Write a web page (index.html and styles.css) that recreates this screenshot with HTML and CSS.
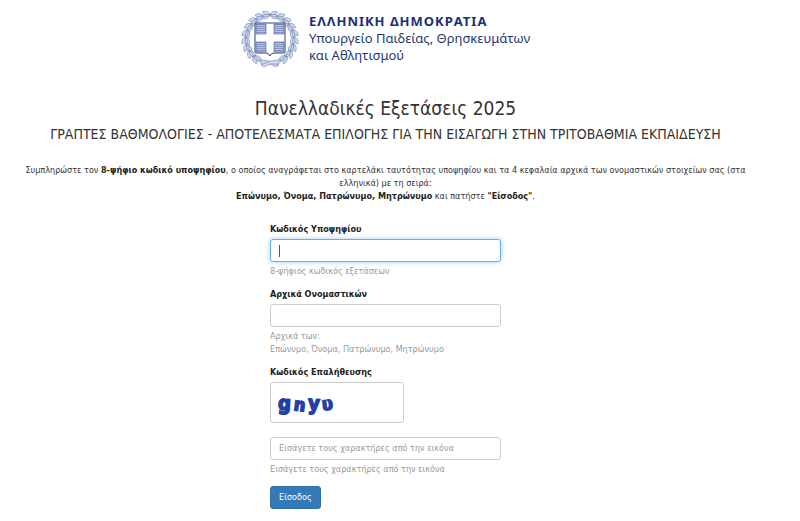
FILE: index.html
```html
<!DOCTYPE html>
<html lang="el">
<head>
  <meta charset="UTF-8">
  <meta name="viewport" content="width=device-width, initial-scale=1.0">
  <title>Πανελλαδικές Εξετάσεις 2025</title>
  <link rel="stylesheet" href="styles.css">
</head>

<body>
  <div class="page">
    <header class="brand">
      <svg class="emblem" viewBox="0 0 58 58" aria-hidden="true">
        <defs>
          <g id="leaf">
            <path d="M30 5C27 6 24 5 22.500 1.500C26 .5 29 1.500 30 5Z"/>
            <path d="M30 5C28 8.500 25 9.500 21.500 8C23.500 5 26.500 3.500 30 5Z"/>
            <path d="M30 5C27 4 24 4 21 5.500C24 7 27 7 30 5Z"/>
          </g>
          <g id="branch">
            <use href="#leaf" transform="rotate(-2 29 29)"/>
            <use href="#leaf" transform="rotate(-19 29 29)"/>
            <use href="#leaf" transform="rotate(-36 29 29)"/>
            <use href="#leaf" transform="rotate(-53 29 29)"/>
            <use href="#leaf" transform="rotate(-70 29 29)"/>
            <use href="#leaf" transform="rotate(-87 29 29)"/>
            <use href="#leaf" transform="rotate(-104 29 29)"/>
            <use href="#leaf" transform="rotate(-121 29 29)"/>
            <use href="#leaf" transform="rotate(-138 29 29)"/>
          </g>
          <pattern id="lines" width="2" height="2" patternUnits="userSpaceOnUse">
            <rect width="2" height="2" fill="#b6c1dc"/>
            <rect width="2" height="1" fill="#8695c0"/>
          </pattern>
        </defs>
        <g class="wreath">
          <use href="#branch"/>
          <use href="#branch" transform="translate(58 0) scale(-1 1)"/>
          <path d="M20 50Q29 50 38 55L35 57L29 54L20 54Z"/>
          <path d="M38 50Q29 50 20 55L23 57L29 54L38 54Z"/>
        </g>
        <path class="shield" d="M14 13H44V41Q44 43 42 43H33Q30 43 29 46Q28 43 25 43H16Q14 43 14 41Z"/>
        <g fill="url(#lines)" stroke="#4b5f9b" stroke-width=".6">
          <path d="M15 14H25V24H15ZM33 14H43V24H33ZM15 32H25V42H16L15 41ZM33 32H43V41L42 42H33Z"/>
        </g>
      </svg>
      <div class="brandText">
        <strong>ΕΛΛΗΝΙΚΗ ΔΗΜΟΚΡΑΤΙΑ</strong>
        <span>Υπουργείο Παιδείας, Θρησκευμάτων</span>
        <span>και Αθλητισμού</span>
      </div>
    </header>

    <h1>Πανελλαδικές Εξετάσεις 2025</h1>
    <h2>ΓΡΑΠΤΕΣ ΒΑΘΜΟΛΟΓΙΕΣ - ΑΠΟΤΕΛΕΣΜΑΤΑ ΕΠΙΛΟΓΗΣ ΓΙΑ ΤΗΝ ΕΙΣΑΓΩΓΗ ΣΤΗΝ ΤΡΙΤΟΒΑΘΜΙΑ ΕΚΠΑΙΔΕΥΣΗ</h2>

    <p class="intro">
      Συμπληρώστε τον <b>8-ψήφιο κωδικό υποψηφίου</b>, ο οποίος αναγράφεται στο καρτελάκι ταυτότητας υποψηφίου και τα 4 κεφαλαία αρχικά των ονομαστικών στοιχείων σας (στα ελληνικά) με τη σειρά:<br>
      <b>Επώνυμο, Όνομα, Πατρώνυμο, Μητρώνυμο</b> και πατήστε <b>"Είσοδος"</b>.
    </p>

    <form class="login">
      <div class="group">
        <label for="code">Κωδικός Υποψηφίου</label>
        <input class="control active" id="code" type="text" aria-describedby="codeHelp">
        <span class="help" id="codeHelp">8-ψήφιος κωδικός εξετάσεων</span>
      </div>
      <div class="group">
        <label for="initials">Αρχικά Ονομαστικών</label>
        <input class="control" id="initials" type="text" aria-describedby="initialsHelp">
        <span class="help" id="initialsHelp">Αρχικά των:<br>Επώνυμο, Όνομα, Πατρώνυμο, Μητρώνυμο</span>
      </div>
      <div class="group">
        <label for="captcha">Κωδικός Επαλήθευσης</label>
        <div class="captcha">
          <svg viewBox="0 0 132 39" aria-hidden="true">
            <text x="7" y="27" transform="rotate(3 13 22)">g</text>
            <text x="23" y="28" class="small" transform="rotate(7 29 22)">n</text>
            <text x="37" y="27" transform="rotate(3 43 22)">y</text>
            <text x="51" y="27" class="small" transform="rotate(-6 56 22)">υ</text>
          </svg>
        </div>
        <input class="control" id="captcha" type="text" placeholder="Εισάγετε τους χαρακτήρες από την εικόνα" aria-describedby="captchaHelp">
        <span class="help" id="captchaHelp">Εισάγετε τους χαρακτήρες από την εικόνα</span>
      </div>
      <button class="submit" type="submit">Είσοδος</button>
    </form>
  </div>
</body>
</html>
```

FILE: styles.css
```css
*{box-sizing:border-box}
body{margin:0;background:#fff;color:#333;
     font:9px/13px "DejaVu Sans Condensed","DejaVu Sans",sans-serif;}
.page{padding:10px 48px 12px 19px;}

/* ministry logo */
.brand{display:flex;justify-content:center;gap:10px;color:#26386f;
       font:13px/17px "Noto Sans","Open Sans",sans-serif;}
.emblem{width:58px;height:58px;flex:none}
.wreath{fill:#d3dbeb;stroke:#6f82b4;stroke-width:.6}
.shield{fill:#fff;stroke:#2b4080;stroke-width:1}
.brandText{display:flex;flex-direction:column;padding-top:3px}
.brandText strong{color:#1c3175;letter-spacing:1px}

h1,h2{margin:0;font-weight:normal;text-align:center}
h1{margin-top:28px;font-size:19px;line-height:24px}
h2{margin-top:6px;font-size:14px;line-height:16px}
.intro{margin:22px 0 20px;text-align:center}
.intro b{color:#222}

.login{width:31.5%;min-width:220px;margin:0 auto}
.group{display:flex;flex-direction:column;margin-bottom:10px}
label{margin-bottom:3px;font-weight:bold;color:#222}
.control{width:100%;height:23px;padding:0 8px;border:1px solid #ccc;border-radius:3px;
         background:#fff;color:#555;font:inherit;outline:none;}
.control::placeholder{color:#999;opacity:1}
.active{border-color:#66afe9;box-shadow:0 0 5px rgba(102,175,233,.6);
        background:linear-gradient(#555,#555) 8px center/1px 12px no-repeat #fff;}
.help{margin-top:3px;color:#999}
.captcha{width:58%;margin-bottom:14px;border:1px solid #ccc;border-radius:3px}
.captcha svg{display:block;width:100%}
.captcha text{fill:#2141a5;stroke:#2141a5;stroke-width:1.5;
              font:bold 20px "DejaVu Sans Condensed","DejaVu Sans",sans-serif;}
.captcha .small{font-size:18px}
.submit{height:23px;padding:0 8px;border:1px solid #2e6da4;border-radius:3px;
        background:#337ab7;color:#fff;font:inherit;}
```
